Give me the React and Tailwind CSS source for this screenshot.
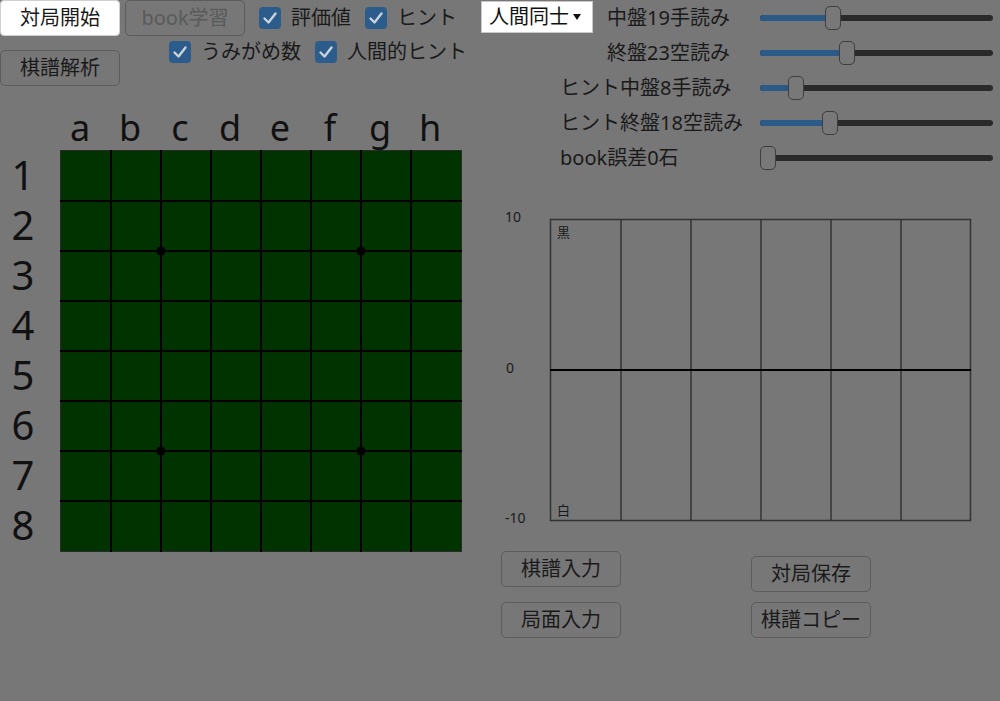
import React from 'react';

const font = { fontFamily: '"Noto Sans", "Noto Sans CJK JP", sans-serif' };

const Check = ({ label }) => (
  <label className="flex items-center gap-[10px] text-[20px] leading-none text-[#1a1a1a]">
    <span className="w-[22px] h-[22px] rounded-[4px] bg-[#2c5c8b] flex items-center justify-center">
      <svg width="16" height="16" viewBox="0 0 16 16">
        <path d="M2.5 8.5 L6.5 12.5 L13.5 3.5" fill="none" stroke="#c9d3dc" strokeWidth="2.4" strokeLinecap="round" strokeLinejoin="round" />
      </svg>
    </span>
    {label}
  </label>
);

const Btn = ({ children, className = '' }) => (
  <button className={`w-[120px] h-[36px] rounded-[5px] border border-[#5c5c5c] text-[20px] text-[#1a1a1a] ${className}`}>
    {children}
  </button>
);

const sliders = [
  { label: '中盤19手読み', v: 19 },
  { label: '終盤23空読み', v: 23 },
  { label: 'ヒント中盤8手読み', v: 8 },
  { label: 'ヒント終盤18空読み', v: 18 },
  { label: 'book誤差0石', v: 0, left: true },
];

const Slider = ({ value }) => {
  const pos = Math.round((value / 63) * (233 - 16));
  return (
    <div className="relative w-[233px] h-[24px] flex items-center">
      <div className="absolute left-0 right-0 h-[6px] rounded-full bg-[#2a2a2a]" />
      <div className="absolute left-0 h-[6px] rounded-full bg-[#2c5a86]" style={{ width: pos + 8 }} />
      <div className="absolute top-0 w-[16px] h-[24px] rounded-[5px] border-[1.5px] border-[#3e3e3e] bg-[#787878]" style={{ left: pos }} />
    </div>
  );
};

const Board = () => {
  const lines = [];
  for (let i = 1; i < 8; i++) {
    lines.push(<line key={'v' + i} x1={1 + i * 50} y1="0" x2={1 + i * 50} y2="402" stroke="#000" strokeWidth="2" />);
    lines.push(<line key={'h' + i} x1="0" y1={1 + i * 50} x2="402" y2={1 + i * 50} stroke="#000" strokeWidth="2" />);
  }
  return (
    <svg width="402" height="402" viewBox="0 0 402 402">
      <rect x="0.5" y="0.5" width="401" height="401" fill="#003300" stroke="#2a2a2a" strokeWidth="1" />
      {lines}
      {[[101, 101], [301, 101], [101, 301], [301, 301]].map(([x, y]) => (
        <circle key={x + '-' + y} cx={x} cy={y} r="4.5" fill="#000" />
      ))}
    </svg>
  );
};

const Graph = () => (
  <svg width="490" height="330" viewBox="495 205 490 330" style={font}>
    <rect x="550.5" y="219.5" width="420" height="301" fill="none" stroke="#333" strokeWidth="1.5" />
    {[621, 691, 761, 831, 901].map((x) => (
      <line key={x} x1={x} y1="219.5" x2={x} y2="520.5" stroke="#333" strokeWidth="1.5" />
    ))}
    <line x1="550" y1="370" x2="971" y2="370" stroke="#000" strokeWidth="2" />
    <text x="505" y="222" fontSize="14" fill="#1a1a1a">10</text>
    <text x="506" y="373" fontSize="14" fill="#1a1a1a">0</text>
    <text x="505" y="523" fontSize="14" fill="#1a1a1a">-10</text>
    <text x="557" y="237" fontSize="13" fill="#1a1a1a">黒</text>
    <text x="557" y="515" fontSize="13" fill="#1a1a1a">白</text>
  </svg>
);

const SliderRow = ({ s, labelW }) => (
  <div className="flex items-center h-[35px]">
    <div className={`whitespace-nowrap text-[20px] text-[#1a1a1a] ${s.left ? 'text-left' : 'text-right'}`} style={{ width: labelW }}>
      {s.label}
    </div>
    <div className="ml-[30px]"><Slider value={s.v} /></div>
  </div>
);

export default function App() {
  return (
    <div className="w-[1000px] h-[701px] bg-[#777777] flex overflow-hidden" style={font}>
      {/* left */}
      <div className="w-[480px] shrink-0 flex flex-col">
        <div className="flex items-center h-[36px]">
          <button className="w-[120px] h-[36px] rounded-[4px] border border-[#d0d0d0] bg-white text-[20px] text-[#1a1a1a]">対局開始</button>
          <Btn className="ml-[5px] !text-[#5a5a5a]">book学習</Btn>
          <div className="ml-[14px]"><Check label="評価値" /></div>
          <div className="ml-[14px]"><Check label="ヒント" /></div>
        </div>
        <div className="flex items-start h-[50px]">
          <Btn className="mt-[14px] h-[35px]">棋譜解析</Btn>
          <div className="ml-[49px] mt-[5px] flex gap-[14px]">
            <Check label="うみがめ数" />
            <Check label="人間的ヒント" />
          </div>
        </div>
        <div className="flex mt-[20px] ml-[60px] h-[44px] items-center text-[36px] leading-none text-[#111]">
          {['a', 'b', 'c', 'd', 'e', 'f', 'g', 'h'].map((c) => (
            <div key={c} className="w-[50px] text-center pr-[10px]">{c}</div>
          ))}
        </div>
        <div className="flex">
          <div className="w-[60px] flex flex-col text-[40px] leading-none text-[#111]">
            {[1, 2, 3, 4, 5, 6, 7, 8].map((n) => (
              <div key={n} className="h-[50px] flex items-center justify-center pr-[14px]">{n}</div>
            ))}
          </div>
          <Board />
        </div>
      </div>

      {/* right */}
      <div className="flex-1 flex flex-col">
        <div className="flex items-start">
          <div className="mt-[1px] ml-[1px] w-[112px] h-[32px] bg-white border border-[#c8c8c8] flex items-center px-[7px] text-[20px] text-[#111] shrink-0">
            人間同士
            <svg className="ml-[4px]" width="8" height="6" viewBox="0 0 8 6"><path d="M0 0 H8 L4 6 Z" fill="#111" /></svg>
          </div>
          <SliderRow s={sliders[0]} labelW={137} />
        </div>
        <div className="flex flex-col ml-[80px]">
          {sliders.slice(1).map((s) => (
            <SliderRow key={s.label} s={s} labelW={170} />
          ))}
        </div>
        <div className="mt-[30px] ml-[15px]">
          <Graph />
        </div>
        <div className="ml-[21px] mt-[16px] flex gap-[130px]">
          <div className="flex flex-col gap-[15px]">
            <Btn className="h-[35px]">棋譜入力</Btn>
            <Btn className="h-[35px]">局面入力</Btn>
          </div>
          <div className="flex flex-col gap-[10px] mt-[5px]">
            <Btn className="h-[35px]">対局保存</Btn>
            <Btn className="h-[35px]">棋譜コピー</Btn>
          </div>
        </div>
      </div>
    </div>
  );
}
